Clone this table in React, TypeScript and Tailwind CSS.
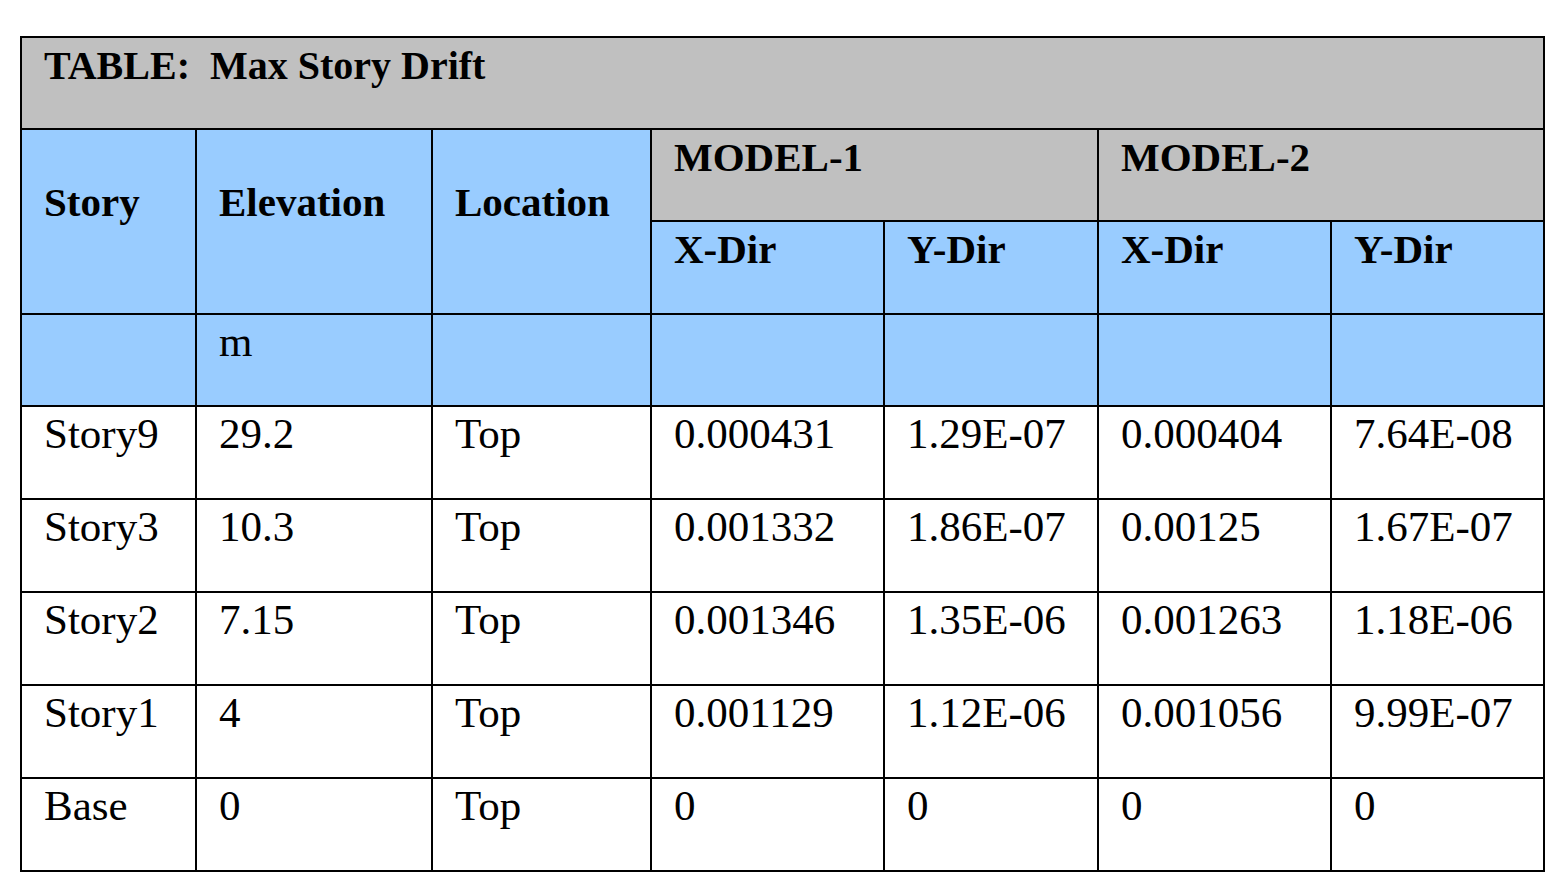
import React from 'react';

const rows = [
  ['Story9', '29.2', 'Top', '0.000431', '1.29E-07', '0.000404', '7.64E-08'],
  ['Story3', '10.3', 'Top', '0.001332', '1.86E-07', '0.00125', '1.67E-07'],
  ['Story2', '7.15', 'Top', '0.001346', '1.35E-06', '0.001263', '1.18E-06'],
  ['Story1', '4', 'Top', '0.001129', '1.12E-06', '0.001056', '9.99E-07'],
  ['Base', '0', 'Top', '0', '0', '0', '0'],
];

const cell = 'pl-[22px] pt-[4px] leading-[46px] whitespace-nowrap';
const head = 'font-bold text-[41px]';

const App: React.FC = () => {
  return (
    <div className="min-h-screen bg-white pl-[20px] pt-[36px] text-black font-['Liberation_Serif',serif] text-[43px]">
      <div className="grid w-fit gap-[2px] bg-black p-[2px] grid-cols-[173px_234px_217px_231px_212px_231px_211px] grid-rows-[90px_90px_91px_90px_91px_91px_91px_91px_91px]">
        {/* Title */}
        <div className={`${cell} col-span-7 bg-[#c0c0c0] pt-[5px] font-bold text-[40px]`}>
          {'TABLE:\u00a0 Max Story Drift'}
        </div>

        {/* Header */}
        <div className={`${cell} ${head} row-span-2 bg-[#99ccff] pt-[49px]`}>Story</div>
        <div className={`${cell} ${head} row-span-2 bg-[#99ccff] pt-[49px]`}>Elevation</div>
        <div className={`${cell} ${head} row-span-2 bg-[#99ccff] pt-[49px]`}>Location</div>
        <div className={`${cell} ${head} col-span-2 bg-[#c0c0c0]`}>MODEL-1</div>
        <div className={`${cell} ${head} col-span-2 bg-[#c0c0c0]`}>MODEL-2</div>
        <div className={`${cell} ${head} bg-[#99ccff]`}>X-Dir</div>
        <div className={`${cell} ${head} bg-[#99ccff]`}>Y-Dir</div>
        <div className={`${cell} ${head} bg-[#99ccff]`}>X-Dir</div>
        <div className={`${cell} ${head} bg-[#99ccff]`}>Y-Dir</div>

        {/* Units */}
        <div className={`${cell} bg-[#99ccff]`}></div>
        <div className={`${cell} bg-[#99ccff]`}>m</div>
        <div className={`${cell} bg-[#99ccff]`}></div>
        <div className={`${cell} bg-[#99ccff]`}></div>
        <div className={`${cell} bg-[#99ccff]`}></div>
        <div className={`${cell} bg-[#99ccff]`}></div>
        <div className={`${cell} bg-[#99ccff]`}></div>

        {/* Data */}
        {rows.map((row, i) =>
          row.map((v, j) => (
            <div key={`${i}-${j}`} className={`${cell} bg-white`}>
              {v}
            </div>
          ))
        )}
      </div>
    </div>
  );
};

export default App;
